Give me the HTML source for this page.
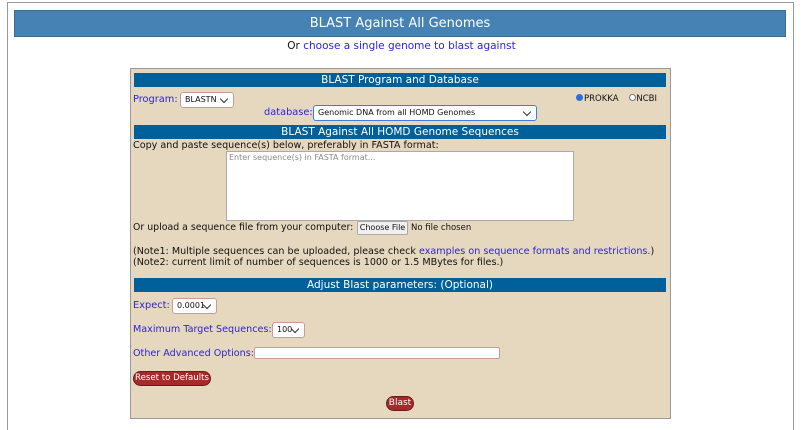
<!DOCTYPE html>
<html><head><meta charset="utf-8"><style>
*{margin:0;padding:0;box-sizing:border-box}
body{width:803px;height:430px;background:#fff;position:relative;overflow:hidden;font-family:"DejaVu Sans","Liberation Sans",sans-serif;font-size:9.6px;color:#111}
.a{position:absolute;white-space:nowrap}
.bl{color:#2a1fe0}
.bar{position:absolute;left:134px;width:532px;height:14px;background:#00609a;color:#fff;text-align:center;line-height:14px;font-size:10.5px}
.sel{position:absolute;background:#fff;border:1px solid #c99;border-radius:3px;font-size:8px;line-height:14px;padding-left:4px;height:16px;white-space:nowrap}
.sel:after{content:"";position:absolute;right:6px;top:3px;width:5px;height:5px;border-right:1.3px solid #333;border-bottom:1.3px solid #333;transform:rotate(45deg)}
.btn{position:absolute;background:#a52a2a;color:#fff;border:1px solid #6b1a1a;border-radius:8px;font-size:9px;line-height:13px;text-align:center;white-space:nowrap}
</style></head><body>
<div class="a" style="left:7px;top:0;width:787px;height:3px;border-bottom:1px solid #999"></div>
<div class="a" style="left:7px;top:3px;width:1px;height:427px;background:#999"></div>
<div class="a" style="left:793px;top:3px;width:1px;height:427px;background:#999"></div>
<div class="a" style="left:14px;top:10px;width:772px;height:27px;background:#4682b4;border:1px solid #3a6d96;color:#fff;text-align:center;line-height:26px;font-size:13px">BLAST Against All Genomes</div>
<div class="a" style="left:0;width:803px;top:40px;text-align:center;font-size:10.5px">Or <span class="bl">choose a single genome to blast against</span></div>
<div class="a" style="left:130px;top:68px;width:541px;height:351px;background:#e6d8bf;border:1px solid #999"></div>
<div class="bar" style="top:73px">BLAST Program and Database</div>
<div class="a" style="left:133px;top:94px;font-size:9.8px"><span class="bl">Program:</span></div>
<div class="sel" style="left:180px;top:92px;width:54px">BLASTN</div>
<div class="a" style="left:576px;top:94px;font-size:8.5px"><span style="display:inline-block;width:7px;height:7px;border-radius:50%;background:#2a6ee8;margin-right:1px"></span>PROKKA &nbsp; &nbsp;<span style="display:inline-block;width:7px;height:7px;border-radius:50%;border:1px solid #777;background:#fff"></span>NCBI</div>
<div class="a" style="left:264px;top:107px;font-size:9.8px"><span class="bl">database:</span></div>
<div class="sel" style="left:313px;top:105px;width:224px;border:1.5px solid #3b7de0">Genomic DNA from all HOMD Genomes</div>
<div class="bar" style="top:125px">BLAST Against All HOMD Genome Sequences</div>
<div class="a" style="left:133px;top:140px">Copy and paste sequence(s) below, preferably in FASTA format:</div>
<div class="a" style="left:226px;top:151px;width:348px;height:70px;background:#fff;border:1px solid #aaa;font-size:8px;color:#888;padding:1px 2px">Enter sequence(s) in FASTA format...</div>
<div class="a" style="left:133px;top:222px;font-size:9.4px">Or upload a sequence file from your computer:</div>
<div class="a" style="left:357px;top:221px;width:51px;height:14px;background:#f0f0f0;border:1px solid #aaa;border-radius:2px;font-size:8px;line-height:12px;text-align:center">Choose File</div>
<div class="a" style="left:411px;top:223px;font-size:8.5px">No file chosen</div>
<div class="a" style="left:133px;top:246px">(Note1: Multiple sequences can be uploaded, please check <span class="bl">examples on sequence formats and restrictions.</span>)</div>
<div class="a" style="left:133px;top:257px">(Note2: current limit of number of sequences is 1000 or 1.5 MBytes for files.)</div>
<div class="bar" style="top:278px">Adjust Blast parameters: (Optional)</div>
<div class="a bl" style="left:133px;top:300px;font-size:9.8px">Expect:</div>
<div class="sel" style="left:172px;top:298px;width:45px">0.0001</div>
<div class="a bl" style="left:133px;top:324px;font-size:9.6px">Maximum Target Sequences:</div>
<div class="sel" style="left:272px;top:322px;width:33px">100</div>
<div class="a bl" style="left:133px;top:348px;font-size:9.6px">Other Advanced Options:</div>
<div class="a" style="left:254px;top:347px;width:246px;height:12px;background:#fff;border:1px solid #c99;border-radius:2px"></div>
<div class="btn" style="left:133px;top:371px;width:78px;font-size:8.6px">Reset to Defaults</div>
<div class="btn" style="left:386px;top:396px;width:28px">Blast</div>
</body></html>
